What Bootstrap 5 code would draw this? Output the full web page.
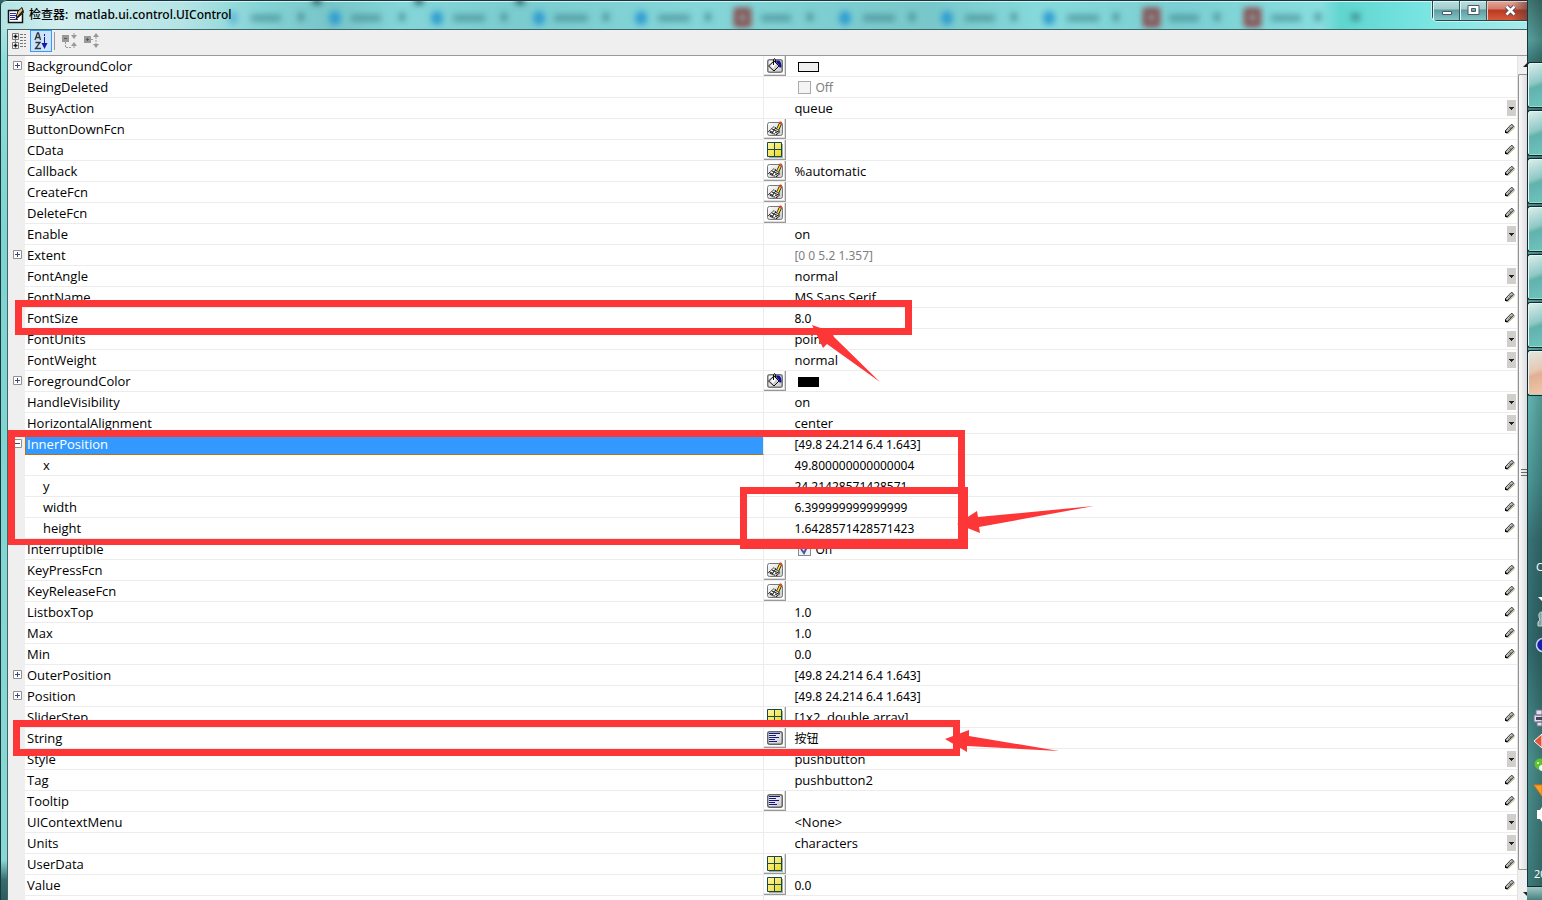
<!DOCTYPE html>
<html lang="zh-CN">
<head>
<meta charset="utf-8">
<meta name="viewport" content="width=device-width, initial-scale=1">
<title>检查器: matlab.ui.control.UIControl</title>
<link rel="stylesheet" href="https://cdn.jsdelivr.net/npm/bootstrap@5.3.0/dist/css/bootstrap.min.css">
<style>
body{font-family:"Noto Sans","Noto Sans CJK SC",sans-serif;font-size:12px;line-height:20px;color:#000;background:#2d6668}
button{border:0;padding:0;background:none;display:block}
svg{display:block}
.win{min-width:0;background:linear-gradient(#c5eaea 0,#8edcd9 60px,#7fd3d0 250px,#8ad8d6 860px,#356c6e 880px,#2b5b5e);border-left:1px solid #16393d;padding-left:6px;border-top-left-radius:6px}
.titlebar{height:29px;margin-left:-6px;padding-left:6px;border-top:1px solid #17333c;box-shadow:inset 0 1px #d5f3f3;background:linear-gradient(90deg,#b4e3e4 0,#d2eeef 60px,#b5e4e5 180px,#84d4d6 260px,#77c5c8 330px,#84d6d8 400px,#7acccf 520px,#84d6d8 700px,#78c8ca 930px,#86dadb 1040px,#7bcfd2 1180px,#88dedf 1320px,#5fd6cf 1340px,#78e4e1 1420px,#a9ebe9 1527px);border-top-left-radius:6px}
.titlebar h1{font-size:12px;line-height:28px;padding-left:4px}
.app-icon{margin-top:6px}
.backdrop{z-index:0}
.caption-btns{height:20px;border:1px solid #24474c;border-top:0;border-right:0;border-radius:0 0 0 5px;box-shadow:0 1px #c9f2f1,-1px 0 #c9f2f1}
.caption-btns button{height:19px;width:27px;border-right:1px solid #34585c;background:linear-gradient(#b9dedf 0,#a3cccd 8px,#5f9b9f 9px,#83c7c7);box-shadow:inset 1px 1px #dff4f4}
.caption-btns .shut{width:40px;border-right:0;background:linear-gradient(90deg,transparent 25px,#6b3a38aa),linear-gradient(#e5a79a 0,#d57b69 8px,#b9381f 9px,#d65a3a);box-shadow:inset 1px 1px #f1c5ba}
.client{border-left:1px solid #3f6668;border-top:1px solid #3f6668;background:#efefef}
.tools{height:26px;border-bottom:1px solid #999}
.tools button{width:22px;height:22px}
.tools .picked{background:#cce4fb;border:1px solid #3399ff}
.sep{width:1px;height:18px;background:#999;margin:2px 4px 0 2px}
.props{table-layout:fixed;background:#fff;border-collapse:separate;border-spacing:0}
.props .c-gut{width:17px}.props .c-name{width:49%}
.props th,.props td{height:21px;padding:0;border-bottom:1px solid #ececec;font-weight:400;overflow:hidden;white-space:nowrap}
.props td:first-child{background:#efefef;border-bottom:0}
.props th{border-right:1px solid #ececec;padding-left:2px;font-family:"Open Sans",sans-serif;font-size:13px}
.props th.kid{padding-left:18px}
.props .sel th{background:#39f;color:#fff;border-bottom:1px solid #b8701c;box-shadow:inset 1px 0 #b8701c}
.tw{width:9px;height:9px;margin:0 0 2px 5px}
.cellgrid{display:grid;grid-template-columns:22px 1fr auto;height:20px;line-height:20px}
.cellgrid>.v{grid-column:2;padding-left:8px;font-size:12px;line-height:22px}
.cellgrid>.w{font-family:"Open Sans",sans-serif;font-size:13px;line-height:20px}
.ed{grid-column:1;grid-row:1;width:22px;height:20px;border-right:1px solid #999;border-bottom:1px solid #999;background:#fff;box-shadow:inset -1px -1px #ddd;padding:1px 0 0 3px}
.pen{grid-column:3;grid-row:1;width:12px;height:20px;padding:0}
.pick{grid-column:2/4;grid-row:1;height:20px;appearance:none;border:0;padding:0 0 0 8px;width:100%;font-family:"Open Sans",sans-serif;font-size:13px;color:#000;background:#fff url("data:image/svg+xml,%3Csvg xmlns='http://www.w3.org/2000/svg' width='10' height='16'%3E%3Cpath fill='%23d0cfcc' d='M1 0h9v16H1z'/%3E%3Cpath fill='%23222' d='M3 7h5v1H7v1H6v1H5V9H4V8H3z'/%3E%3C/svg%3E") no-repeat right 1px center}
.form-check-input.tick[type=checkbox]{width:13px;height:13px;margin:0 4px 0 4px;border-radius:0;border:1px solid #aaa;background-color:#f4f4f4;vertical-align:-2px}
.tick:disabled{opacity:1}
.form-check-input.tick[type=checkbox]:checked{background-color:#eef1f8;border-color:#8a8a8a;background-image:url("data:image/svg+xml,%3Csvg xmlns='http://www.w3.org/2000/svg' viewBox='0 0 11 11'%3E%3Cpath fill='none' stroke='%234457a0' stroke-width='2' d='M2 5l3 4 4-8'/%3E%3C/svg%3E")}
.off,.off .tick:disabled~label{color:#808080;opacity:1}
.swatch{display:inline-block;width:21px;height:10px;border:1px solid #000;background:#f0f0f0;margin-left:4px;vertical-align:-1px}
.rail{width:10px;background:#f0f0f0;border-left:1px solid #e3e3e3}
.rail .end{height:18px;padding-left:5px}
.rail .foot{height:30px}
.thumb{border:1px solid #929292;border-right:0;border-radius:2px 0 0 2px;background:linear-gradient(90deg,#fafafa,#dcdce0)}
.taskbar{width:15px;padding-top:62px;background:linear-gradient(90deg,#0000 0,#0003 100%),linear-gradient(#3f7773 0,#57a39f 40px,#3c7d7c 60px,#63b6b2 400px,#4c9a99 480px,#397578 540px,#326c6e 650px,#4c9290 760px,#3b7a79);box-shadow:inset 1px 0 #173438}
.task{height:46px;margin-bottom:2px;border:1px solid #12292c;border-right:0;border-radius:3px 0 0 3px;background:linear-gradient(160deg,#dcefed 0,#8fc9c5 45%,#62b1ad 55%,#6ec4bf);box-shadow:inset 1px 1px #e4f5f4,inset 0 -1px #9ed6d3}
.task.hot{background:linear-gradient(160deg,#dfe9e2 0,#e6c8b3 45%,#dfb093 55%,#f1c7aa)}
.tray{color:#fff;font-size:11px;line-height:14px;padding-left:1px}
.lang{padding-left:8px}
.clock{padding:0 0 5px 6px}
.peek{height:14px;background:linear-gradient(#9fc9c7,#487f7e)}
.notes{pointer-events:none}
</style>
</head>
<body class="vh-100 overflow-hidden d-flex">
<svg width="0" height="0" class="position-absolute" aria-hidden="true">
<defs>
<linearGradient id="yel" x2="1" y2="1"><stop stop-color="#fff7a8"/><stop offset="1" stop-color="#f0d820"/></linearGradient>
<linearGradient id="gry" x2="1" y2="1"><stop stop-color="#fff"/><stop offset="1" stop-color="#c8c8c8"/></linearGradient>
<symbol id="plus" viewBox="0 0 9 9"><path fill="#fff" stroke="#919191" d="M.5.5h8v8h-8z"/><path stroke="#39497c" d="M2 4.500h5M4.500 2v5"/></symbol>
<symbol id="minus" viewBox="0 0 9 9"><path fill="#fff" stroke="#919191" d="M.5.5h8v8h-8z"/><path stroke="#39497c" d="M2 4.500h5"/></symbol>
<symbol id="pencil" viewBox="0 0 10 10"><path d="M1 9.500L3 9.200l6-5.500V2" fill="none" stroke="#b5b294" stroke-width="1.300"/><path d="M.5 8.500V6.500L6 .7h1.500l1 1.600L3 8z" fill="#d4d4d4" stroke="#333"/><path d="M3 5.500L4.500 7M5 3.500L6.500 5M4 5.500l3-3" stroke="#555"/><path d="M.7 6.500v2h2" fill="none" stroke="#000" stroke-width="1.200"/></symbol>
<symbol id="grid4" viewBox="0 0 16 16"><path fill="#9db0a4" d="M2 2h14v14H2z"/><path fill="url(#yel)" stroke="#174b4b" d="M.5.5h14v14H.5zM7.500.5v14M.5 7.500h14"/></symbol>
<symbol id="script" viewBox="0 0 16 16"><rect x=".5" y="1.500" width="15" height="13" rx="2" fill="url(#gry)" stroke="#777"/><path d="M1.500 10.500l5-4.500 2 .5-3.500 5.500zM5 12.500l4-5.500 4 3.500-3 3z" fill="#fff" stroke="#111" stroke-dasharray="2 .6"/><path d="M3 10l2 1M5 8l2 1M8 11l3 1.500M8 9.500l4 1.500" stroke="#111"/><path d="M13.500 2.500l-3 6.500" stroke="#111" stroke-width="3"/><path d="M13.300 3l-2.700 5.500" stroke="#ffe425" stroke-width="1.700"/><path d="M14 .7l-.8 2.500" stroke="#e5402b" stroke-width="2.400"/></symbol>
<symbol id="bucket" viewBox="0 0 16 16"><rect x=".75" y="1.750" width="14.500" height="12.500" rx="2" fill="url(#gry)" stroke="#777" stroke-width="1.500"/><path d="M1.500 8L7 3l5 5-5 5z" fill="#cfcfcf" stroke="#111"/><path d="M4 8l3-4 2 2.500-3 4z" fill="#fff"/><path d="M6.500 7V1.500l1-1 1 1V5" fill="none" stroke="#111"/><path d="M9 2.500h3q2.500 1 2.500 7h-2l-1-3-2-1.500z" fill="#101090"/></symbol>
<symbol id="lines" viewBox="0 0 16 16"><rect x=".75" y="1.750" width="14.500" height="12.500" rx="2" fill="url(#gry)" stroke="#666" stroke-width="1.500"/><path d="M2 3.500h11M2 5.500h7M2 7.500h10M2 9.500h6M2 11.500h8" stroke="#15158a"/></symbol>
</defs>
</svg>

<main class="win flex-fill d-flex flex-column position-relative">
<header class="titlebar d-flex align-items-start position-relative flex-shrink-0">
<svg class="backdrop position-absolute top-0 start-0 w-100 h-100" aria-hidden="true">
<defs><filter id="haze" x="-5%" y="-50%" width="110%" height="200%"><feGaussianBlur stdDeviation="3"/></filter></defs>
<g filter="url(#haze)">
<g fill="#2f9bd0"><ellipse cx="334" cy="17" rx="6" ry="7"/><ellipse cx="436" cy="17" rx="6" ry="7"/><ellipse cx="538" cy="17" rx="6" ry="7"/><ellipse cx="640" cy="17" rx="6" ry="7"/><ellipse cx="844" cy="17" rx="6" ry="7"/><ellipse cx="946" cy="17" rx="6" ry="7"/><ellipse cx="1048" cy="17" rx="6" ry="7"/><ellipse cx="232" cy="17" rx="5" ry="7" opacity=".5"/></g>
<g fill="none" stroke="#8b3f42" stroke-width="6"><path d="M736 10h11v13h-11zM1145 10h11v13h-11zM1246 10h11v13h-11z"/></g>
<g stroke="#35797f" stroke-width="7" opacity=".55"><path d="M250 17h30M350 17h30M452 17h32M553 17h34M657 17h32M760 17h30M862 17h32M964 17h30M1066 17h32M1168 17h30M1270 17h30"/></g>
<g stroke="#2f6d74" stroke-width="8" opacity=".65"><path d="M297 16h6M398 16h6M500 16h6M602 16h6M704 16h6M806 16h6M908 16h6M1010 16h6M1112 16h6M1213 16h6M1314 16h6M1350 16h9"/></g>
<path stroke="#1e4b52" stroke-width="6" d="M312 0h8M414 0h8M515 0h8"/>
</g>
</svg>
<svg class="app-icon position-relative" width="18" height="18" viewBox="0 0 18 18" aria-hidden="true"><path d="M1.500 3.500h14v12h-14z" fill="#fff" stroke="#111" stroke-width="1.500"/><path d="M3 6.500h6M3 8.500h7M3 10.500h5M3 12.500h8" stroke="#2929a5"/><path d="M9 10l2-6 4-3.500 1.500 5-5 4.500z" fill="#e4bd79" stroke="#111"/><path d="M9 12l7-8" stroke="#111" stroke-width="1.500"/></svg>
<h1 class="mb-0 position-relative flex-fill">检查器:&nbsp; matlab.ui.control.UIControl</h1>
<div class="caption-btns d-flex position-relative">
<button aria-label="最小化"><svg width="27" height="19"><path d="M9.500 10.500h9v3h-9z" fill="#fff" stroke="#4b5868"/></svg></button>
<button aria-label="最大化"><svg width="27" height="19"><path d="M8 4.500h11v9H8zM11.500 7.500h4v3h-4z" fill="#fff" fill-rule="evenodd" stroke="#4b5868"/></svg></button>
<button class="shut" aria-label="关闭"><svg width="40" height="19"><path d="M19.500 5.500l8 8M27.500 5.500l-8 8" stroke="#4b4858" stroke-width="4.500"/><path d="M19.500 5.500l8 8M27.500 5.500l-8 8" stroke="#fff" stroke-width="2.500"/></svg></button>
</div>
</header>

<section class="client flex-fill d-flex flex-column overflow-hidden">
<div class="tools d-flex align-items-start flex-shrink-0" role="toolbar">
<button aria-label="按类别"><svg width="22" height="22"><path d="M4.500 3.500h6v6h-6zM4.500 12.500h6v6h-6z" fill="#fff" stroke="#777"/><path d="M5.500 6.500h4M7.500 4.500v4M5.500 15.500h4M7.500 13.500v4" stroke="#111" stroke-width="1.500"/><path d="M7.500 10v2M12 4.500h3M12 7.500h3M12 10.500h3M12 13.500h3M12 16.500h3M16 4.500h2M16 7.500h2M16 10.500h2M16 13.500h2M16 16.500h2" stroke="#777"/></svg></button>
<button class="picked" aria-label="按字母排序"><svg width="20" height="20"><g fill="none" stroke="#333" stroke-width="1.300"><path d="M4 9l2.500-7h1L9.500 9M5 6.500h4M4.500 11.500H9L4.500 17.500H10"/></g><path d="M13.500 3v2M13.500 6v7" stroke="#1717a5"/><path d="M10.500 12h6l-3 6z" fill="#1717a5"/></svg></button>
<i class="sep"></i>
<button aria-label="全部折叠"><svg width="22" height="22"><g fill="#999"><path d="M3 5h7v7H3zM12 5h6l-3 4zM12 16h6l-3-4z"/></g><path d="M5 8.500h3" stroke="#555"/><path d="M6.500 12v5.500H12M15 3v3M15 16v3" stroke="#999" fill="none" stroke-dasharray="2 1"/></svg></button>
<button aria-label="全部展开"><svg width="22" height="22"><g fill="#999"><path d="M3 6h7v7H3zM12 7h6l-3-4zM12 14h6l-3 4z"/></g><path d="M5 9.500h3M6.500 8v3" stroke="#555"/><path d="M10 9.500h2M15 7v8" stroke="#999" stroke-dasharray="2 1"/></svg></button>
</div>
<div class="d-flex flex-fill overflow-hidden">
<div class="flex-fill bg-white overflow-hidden">
<table class="props w-100">
<colgroup><col class="c-gut"><col class="c-name"><col></colgroup>
<tbody>
<tr><td><button class="tw" aria-label="展开"><svg width="9" height="9"><use href="#plus"/></svg></button></td><th scope="row">BackgroundColor</th><td><div class="cellgrid"><button class="ed" aria-label="颜色"><svg width="16" height="16"><use href="#bucket"/></svg></button><span class="v"><i class="swatch"></i></span></div></td></tr>
<tr><td></td><th scope="row">BeingDeleted</th><td><div class="cellgrid"><span class="v off"><input class="form-check-input tick" type="checkbox" id="del" disabled><label for="del">Off</label></span></div></td></tr>
<tr><td></td><th scope="row">BusyAction</th><td><div class="cellgrid"><select class="pick" aria-label="BusyAction"><option>queue</option></select></div></td></tr>
<tr><td></td><th scope="row">ButtonDownFcn</th><td><div class="cellgrid"><button class="ed" aria-label="回调"><svg width="16" height="16"><use href="#script"/></svg></button><button class="pen" aria-label="编辑"><svg width="10" height="10"><use href="#pencil"/></svg></button></div></td></tr>
<tr><td></td><th scope="row">CData</th><td><div class="cellgrid"><button class="ed" aria-label="数组"><svg width="16" height="16"><use href="#grid4"/></svg></button><button class="pen" aria-label="编辑"><svg width="10" height="10"><use href="#pencil"/></svg></button></div></td></tr>
<tr><td></td><th scope="row">Callback</th><td><div class="cellgrid"><button class="ed" aria-label="回调"><svg width="16" height="16"><use href="#script"/></svg></button><span class="v w">%automatic</span><button class="pen" aria-label="编辑"><svg width="10" height="10"><use href="#pencil"/></svg></button></div></td></tr>
<tr><td></td><th scope="row">CreateFcn</th><td><div class="cellgrid"><button class="ed" aria-label="回调"><svg width="16" height="16"><use href="#script"/></svg></button><button class="pen" aria-label="编辑"><svg width="10" height="10"><use href="#pencil"/></svg></button></div></td></tr>
<tr><td></td><th scope="row">DeleteFcn</th><td><div class="cellgrid"><button class="ed" aria-label="回调"><svg width="16" height="16"><use href="#script"/></svg></button><button class="pen" aria-label="编辑"><svg width="10" height="10"><use href="#pencil"/></svg></button></div></td></tr>
<tr><td></td><th scope="row">Enable</th><td><div class="cellgrid"><select class="pick" aria-label="Enable"><option>on</option></select></div></td></tr>
<tr><td><button class="tw" aria-label="展开"><svg width="9" height="9"><use href="#plus"/></svg></button></td><th scope="row">Extent</th><td><div class="cellgrid"><span class="v off">[0 0 5.2 1.357]</span></div></td></tr>
<tr><td></td><th scope="row">FontAngle</th><td><div class="cellgrid"><select class="pick" aria-label="FontAngle"><option>normal</option></select></div></td></tr>
<tr><td></td><th scope="row">FontName</th><td><div class="cellgrid"><span class="v w">MS Sans Serif</span><button class="pen" aria-label="编辑"><svg width="10" height="10"><use href="#pencil"/></svg></button></div></td></tr>
<tr><td></td><th scope="row">FontSize</th><td><div class="cellgrid"><span class="v">8.0</span><button class="pen" aria-label="编辑"><svg width="10" height="10"><use href="#pencil"/></svg></button></div></td></tr>
<tr><td></td><th scope="row">FontUnits</th><td><div class="cellgrid"><select class="pick" aria-label="FontUnits"><option>points</option></select></div></td></tr>
<tr><td></td><th scope="row">FontWeight</th><td><div class="cellgrid"><select class="pick" aria-label="FontWeight"><option>normal</option></select></div></td></tr>
<tr><td><button class="tw" aria-label="展开"><svg width="9" height="9"><use href="#plus"/></svg></button></td><th scope="row">ForegroundColor</th><td><div class="cellgrid"><button class="ed" aria-label="颜色"><svg width="16" height="16"><use href="#bucket"/></svg></button><span class="v"><i class="swatch bg-black"></i></span></div></td></tr>
<tr><td></td><th scope="row">HandleVisibility</th><td><div class="cellgrid"><select class="pick" aria-label="HandleVisibility"><option>on</option></select></div></td></tr>
<tr><td></td><th scope="row">HorizontalAlignment</th><td><div class="cellgrid"><select class="pick" aria-label="HorizontalAlignment"><option>center</option></select></div></td></tr>
<tr class="sel"><td><button class="tw" aria-label="折叠"><svg width="9" height="9"><use href="#minus"/></svg></button></td><th scope="row">InnerPosition</th><td><div class="cellgrid"><span class="v">[49.8 24.214 6.4 1.643]</span></div></td></tr>
<tr><td></td><th scope="row" class="kid">x</th><td><div class="cellgrid"><span class="v">49.800000000000004</span><button class="pen" aria-label="编辑"><svg width="10" height="10"><use href="#pencil"/></svg></button></div></td></tr>
<tr><td></td><th scope="row" class="kid">y</th><td><div class="cellgrid"><span class="v">24.21428571428571</span><button class="pen" aria-label="编辑"><svg width="10" height="10"><use href="#pencil"/></svg></button></div></td></tr>
<tr><td></td><th scope="row" class="kid">width</th><td><div class="cellgrid"><span class="v">6.399999999999999</span><button class="pen" aria-label="编辑"><svg width="10" height="10"><use href="#pencil"/></svg></button></div></td></tr>
<tr><td></td><th scope="row" class="kid">height</th><td><div class="cellgrid"><span class="v">1.6428571428571423</span><button class="pen" aria-label="编辑"><svg width="10" height="10"><use href="#pencil"/></svg></button></div></td></tr>
<tr><td></td><th scope="row">Interruptible</th><td><div class="cellgrid"><span class="v"><input class="form-check-input tick" type="checkbox" id="intr" checked><label for="intr">On</label></span></div></td></tr>
<tr><td></td><th scope="row">KeyPressFcn</th><td><div class="cellgrid"><button class="ed" aria-label="回调"><svg width="16" height="16"><use href="#script"/></svg></button><button class="pen" aria-label="编辑"><svg width="10" height="10"><use href="#pencil"/></svg></button></div></td></tr>
<tr><td></td><th scope="row">KeyReleaseFcn</th><td><div class="cellgrid"><button class="ed" aria-label="回调"><svg width="16" height="16"><use href="#script"/></svg></button><button class="pen" aria-label="编辑"><svg width="10" height="10"><use href="#pencil"/></svg></button></div></td></tr>
<tr><td></td><th scope="row">ListboxTop</th><td><div class="cellgrid"><span class="v">1.0</span><button class="pen" aria-label="编辑"><svg width="10" height="10"><use href="#pencil"/></svg></button></div></td></tr>
<tr><td></td><th scope="row">Max</th><td><div class="cellgrid"><span class="v">1.0</span><button class="pen" aria-label="编辑"><svg width="10" height="10"><use href="#pencil"/></svg></button></div></td></tr>
<tr><td></td><th scope="row">Min</th><td><div class="cellgrid"><span class="v">0.0</span><button class="pen" aria-label="编辑"><svg width="10" height="10"><use href="#pencil"/></svg></button></div></td></tr>
<tr><td><button class="tw" aria-label="展开"><svg width="9" height="9"><use href="#plus"/></svg></button></td><th scope="row">OuterPosition</th><td><div class="cellgrid"><span class="v">[49.8 24.214 6.4 1.643]</span></div></td></tr>
<tr><td><button class="tw" aria-label="展开"><svg width="9" height="9"><use href="#plus"/></svg></button></td><th scope="row">Position</th><td><div class="cellgrid"><span class="v">[49.8 24.214 6.4 1.643]</span></div></td></tr>
<tr><td></td><th scope="row">SliderStep</th><td><div class="cellgrid"><button class="ed" aria-label="数组"><svg width="16" height="16"><use href="#grid4"/></svg></button><span class="v w">[1x2&nbsp; double array]</span><button class="pen" aria-label="编辑"><svg width="10" height="10"><use href="#pencil"/></svg></button></div></td></tr>
<tr><td></td><th scope="row">String</th><td><div class="cellgrid"><button class="ed" aria-label="文本"><svg width="16" height="16"><use href="#lines"/></svg></button><span class="v">按钮</span><button class="pen" aria-label="编辑"><svg width="10" height="10"><use href="#pencil"/></svg></button></div></td></tr>
<tr><td></td><th scope="row">Style</th><td><div class="cellgrid"><select class="pick" aria-label="Style"><option>pushbutton</option></select></div></td></tr>
<tr><td></td><th scope="row">Tag</th><td><div class="cellgrid"><span class="v w">pushbutton2</span><button class="pen" aria-label="编辑"><svg width="10" height="10"><use href="#pencil"/></svg></button></div></td></tr>
<tr><td></td><th scope="row">Tooltip</th><td><div class="cellgrid"><button class="ed" aria-label="文本"><svg width="16" height="16"><use href="#lines"/></svg></button><button class="pen" aria-label="编辑"><svg width="10" height="10"><use href="#pencil"/></svg></button></div></td></tr>
<tr><td></td><th scope="row">UIContextMenu</th><td><div class="cellgrid"><select class="pick" aria-label="UIContextMenu"><option>&lt;None&gt;</option></select></div></td></tr>
<tr><td></td><th scope="row">Units</th><td><div class="cellgrid"><select class="pick" aria-label="Units"><option>characters</option></select></div></td></tr>
<tr><td></td><th scope="row">UserData</th><td><div class="cellgrid"><button class="ed" aria-label="数组"><svg width="16" height="16"><use href="#grid4"/></svg></button><button class="pen" aria-label="编辑"><svg width="10" height="10"><use href="#pencil"/></svg></button></div></td></tr>
<tr><td></td><th scope="row">Value</th><td><div class="cellgrid"><button class="ed" aria-label="数组"><svg width="16" height="16"><use href="#grid4"/></svg></button><span class="v">0.0</span><button class="pen" aria-label="编辑"><svg width="10" height="10"><use href="#pencil"/></svg></button></div></td></tr>
<tr><td></td><th></th><td></td></tr>
</tbody>
</table>
</div>
<div class="rail flex-shrink-0 d-flex flex-column">
<div class="end"><svg width="4" height="18"><path d="M0 11l4-4v4z" fill="#222"/></svg></div>
<div class="thumb flex-fill d-flex align-items-center justify-content-end"><svg width="6" height="9"><path d="M0 1.500h6M0 4.500h6M0 7.500h6" stroke="#666"/></svg></div>
<div class="end foot"><svg width="4" height="30"><path d="M0 22h4v4z" fill="#222"/></svg></div>
</div>
</div>
</section>

<svg class="notes position-absolute top-0 start-0 w-100 h-100" aria-hidden="true">
<g transform="translate(-1)" fill="#fd3737">
<g fill-rule="evenodd"><path d="M15 300H912V335H15zM22 307V328H905V307z"/><path d="M8 430H965V545H8zM15 437V539H958V437z"/><path d="M740 487H968V549H740zM747 494V539H958V494z"/><path d="M13 720H960V756H13zM20 727V749H953V727z"/></g>
<path d="M812 325l20 7 2 5 46 45-53-38-4 4z"/>
<path d="M957 524l20-13 1 6 116-11-115 21 1 6z"/>
<path d="M945 739l24-9v6l90 15-92-5v6z"/>
</g>
</svg>
</main>

<aside class="taskbar flex-shrink-0 d-flex flex-column overflow-hidden">
<button class="task" aria-label="任务 1"></button><button class="task" aria-label="任务 2"></button><button class="task" aria-label="任务 3"></button><button class="task" aria-label="任务 4"></button><button class="task" aria-label="任务 5"></button><button class="task" aria-label="任务 6"></button><button class="task hot" aria-label="任务 7"></button>
<div class="tray mt-auto">
<div class="lang">C</div>
<svg width="14" height="293" viewBox="1528 574 14 293" aria-hidden="true">
<path d="M1538 597h4v4z" fill="#fff"/><path d="M1542 612q-4 0-3 5l1 3q-3 1-2 6h4z" fill="#7fa0a5" stroke="#c5d3d4"/>
<circle cx="1543" cy="645" r="6.500" fill="#1520b0" stroke="#ccd4e8" stroke-width="1.500"/>
<path d="M1536 710h6v5h-6zM1534 715h8v7h-8zM1537 722h5v4h-5z" fill="#dfe0ee" stroke="#74748c"/><path d="M1536 717h6v3h-6z" fill="#454560"/>
<path d="M1534 741l8-7v14z" fill="#e2553c" stroke="#fff"/>
<circle cx="1540" cy="764" r="5.500" fill="#5cc52d"/><circle cx="1538" cy="763" r="1" fill="#fff"/><ellipse cx="1543" cy="768" rx="4" ry="3" fill="#fff"/>
<path d="M1534 785h8v11z" fill="#ff9d22" stroke="#e07b10"/>
<path d="M1537 810h3l2-3v15l-2-3h-3z" fill="#fff"/>
</svg>
<div class="clock">20</div>
</div>
<button class="peek flex-shrink-0 w-100 border-top border-dark" aria-label="显示桌面"></button>
</aside>
<script src="https://cdn.jsdelivr.net/npm/bootstrap@5.3.0/dist/js/bootstrap.bundle.min.js"></script>
</body>
</html>
